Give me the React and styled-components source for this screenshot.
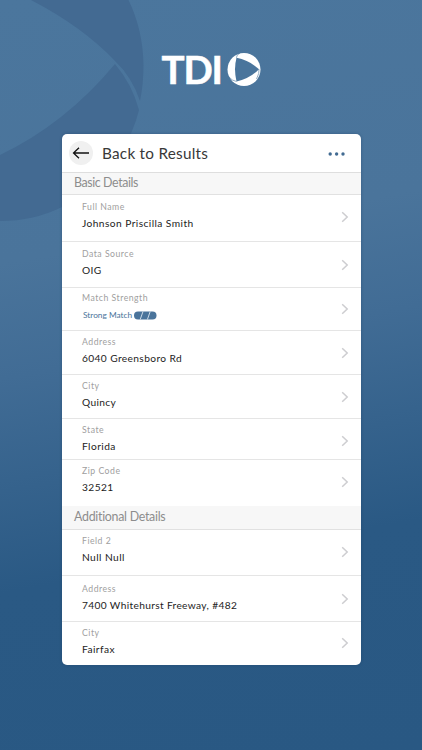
import React from "react";
import styled, { createGlobalStyle } from "styled-components";

const Global = createGlobalStyle`
  * { box-sizing: border-box; }
  body { margin: 0; font-family: Lato, "Open Sans", sans-serif; }
`;

const Page = styled.main`
  position: relative;
  width: 422px;
  height: 750px;
  overflow: hidden;
  display: flex;
  flex-direction: column;
  align-items: center;
  background: linear-gradient(170deg, #4b769d 0%, #4a749b 32%, #416c95 46%, #2a5984 72%, #295883 100%);
`;

const Backdrop = styled.svg`
  position: absolute;
  left: 0;
  top: 0;
`;

const Brand = styled.header`
  position: relative;
  height: 134px;
  width: 100%;
  padding: 41px 0 0 161px;
  display: flex;
  align-items: flex-start;
`;

const BrandSvg = styled.svg`
  display: block;
  overflow: visible;
  text {
    font-family: Lato, "Open Sans", sans-serif;
    font-weight: 700;
    font-size: 38.5px;
    fill: #fff;
  }
`;

const Card = styled.section`
  position: relative;
  width: 299px;
  height: 531px;
  margin-left: 1px;
  background: #fff;
  border-radius: 5px;
  overflow: hidden;
  box-shadow: 0 0 3px rgba(30, 60, 95, 0.45);
`;

const TopBar = styled.div`
  height: 38px;
  display: flex;
  align-items: center;
  padding: 0 16.5px 0 7px;
`;

const BackButton = styled.button`
  width: 24px;
  height: 24px;
  border: 0;
  padding: 0;
  border-radius: 50%;
  background: #f0f0f0;
  display: grid;
  place-items: center;
`;

const Title = styled.h1`
  margin: 0 auto 0 9px;
  font-size: 15.3px;
  line-height: 20px;
  font-weight: 400;
  letter-spacing: 0.25px;
  color: #383838;
  white-space: nowrap;
`;

const Dots = styled.svg`
  margin-top: 2px;
`;

const SectionTitle = styled.h2`
  margin: 0;
  height: ${(p) => p.$h}px;
  padding-left: 12px;
  font-size: 12.4px;
  font-weight: 400;
  line-height: ${(p) => p.$lh}px;
  letter-spacing: ${(p) => p.$ls}px;
  color: #8d8d8d;
  background: #f7f7f7;
  border-top: ${(p) => (p.$first ? "1px solid #dedede" : "0")};
  border-bottom: 1px solid #e1e1e1;
`;

const Row = styled.div`
  height: ${(p) => p.$h}px;
  padding: ${(p) => p.$pad}px 12px 0 20px;
  display: flex;
  justify-content: space-between;
  align-items: flex-start;
  border-bottom: ${(p) => (p.$last ? "0" : "1px solid #e5e5e5")};
`;

const Label = styled.div`
  height: 13px;
  line-height: 14px;
  font-size: 8.7px;
  letter-spacing: 0.5px;
  color: #a0a0a0;
`;

const Value = styled.div`
  height: 20px;
  line-height: 20px;
  font-size: 10.2px;
  letter-spacing: ${(p) => p.$ls ?? 0.43}px;
  color: #1c1c1c;
  white-space: nowrap;
`;

const Match = styled.div`
  height: 22px;
  padding-left: 1px;
  display: flex;
  align-items: center;
  gap: 2px;
  font-size: 8.3px;
  letter-spacing: 0;
  color: #49739a;
`;

const Chevron = styled.svg`
  margin-top: ${(p) => p.$top ?? 12}px;
  flex: none;
`;

const basic = [
  { label: "Full Name", value: "Johnson Priscilla Smith", h: 47, pad: 5, top: 11 },
  { label: "Data Source", value: "OIG", h: 46, pad: 5 },
  { label: "Match Strength", match: "Strong Match", h: 43, pad: 3 },
  { label: "Address", value: "6040 Greensboro Rd", h: 44, pad: 4, ls: 0.38 },
  { label: "City", value: "Quincy", h: 44, pad: 4, ls: 0.33 },
  { label: "State", value: "Florida", h: 41, pad: 4 },
  { label: "Zip Code", value: "32521", h: 46, pad: 4, last: true },
];

const additional = [
  { label: "Field 2", value: "Null Null", h: 46, pad: 4, top: 11.5 },
  { label: "Address", value: "7400 Whitehurst Freeway, #482", h: 46, pad: 6, ls: 0.34, top: 11 },
  { label: "City", value: "Fairfax", h: 44, pad: 4, top: 11, last: true },
];

function StrengthPill() {
  return (
    <svg width="23" height="9" viewBox="0 0 23 9">
      <rect x="0" y="0.5" width="22.5" height="8" rx="4" fill="#4a749b" />
      <path d="M9 0.5 6.2 8.5M16.2 0.5 13.4 8.5" stroke="#dce6ef" strokeWidth="0.9" />
    </svg>
  );
}

function DetailRow({ item }) {
  return (
    <Row $h={item.h} $pad={item.pad} $last={item.last}>
      <div>
        <Label>{item.label}</Label>
        {item.match ? (
          <Match>
            {item.match}
            <StrengthPill />
          </Match>
        ) : (
          <Value $ls={item.ls}>{item.value}</Value>
        )}
      </div>
      <Chevron $top={item.top} width="8" height="12" viewBox="0 0 8 12" fill="none">
        <path d="M1.2 1.200 6.200 6 1.200 10.800" stroke="#cdcdd0" strokeWidth="1.500" />
      </Chevron>
    </Row>
  );
}

export default function App() {
  return (
    <Page>
      <Global />
      <Backdrop width="160" height="230" viewBox="0 0 160 230">
        <g fill="#436a92">
          <path d="M31 0H128.500Q143 30 143.500 65Q143.500 84 140 101Q132 77 115 61Q83 27 31 0Z" />
          <path d="M115 64Q132 84 139 110Q136 122 132 131Q113 179 62 207Q34 221 0 221V155Q65 124 115 64Z" />
        </g>
      </Backdrop>
      <Brand>
        <BrandSvg width="101" height="58" viewBox="0 -10 101 58">
          <text x="0.400 22.600 50.500" y="32.600" stroke="#fff" strokeWidth="0.500">TDI</text>
          <circle cx="83" cy="18.500" r="16.500" fill="#fff" />
          <path d="M75.500 6.800Q88 9 98 18.200Q89 27.500 75.500 30.500Q72.500 18 75.500 6.800Z" fill="#4a759c" />
          <path d="M75.500 6.800Q75 4 79 2.200M98 18.200Q98.600 22 95.500 28M75.500 30.500Q71 29.800 68 26" stroke="#4a759c" strokeWidth="0.6" fill="none" />
        </BrandSvg>
      </Brand>
      <Card>
        <TopBar>
          <BackButton aria-label="Back">
            <svg width="18" height="14" viewBox="0 0 18 14" fill="none" stroke="#111" strokeWidth="1.300">
              <path d="M17 7H1.500M7 1.700 1.500 7 7 12.300" />
            </svg>
          </BackButton>
          <Title>Back to Results</Title>
          <Dots width="17" height="4" viewBox="0 0 17 4" fill="#426b92">
            <circle cx="2.200" cy="2" r="1.700" />
            <circle cx="8.600" cy="2" r="1.700" />
            <circle cx="15" cy="2" r="1.700" />
          </Dots>
        </TopBar>
        <SectionTitle $h={23} $first $lh={20} $ls={-0.4}>Basic Details</SectionTitle>
        {basic.map((item) => (
          <DetailRow key={item.label} item={item} />
        ))}
        <SectionTitle $h={24} $lh={22} $ls={-0.28}>Additional Details</SectionTitle>
        {additional.map((item) => (
          <DetailRow key={item.label} item={item} />
        ))}
      </Card>
    </Page>
  );
}
